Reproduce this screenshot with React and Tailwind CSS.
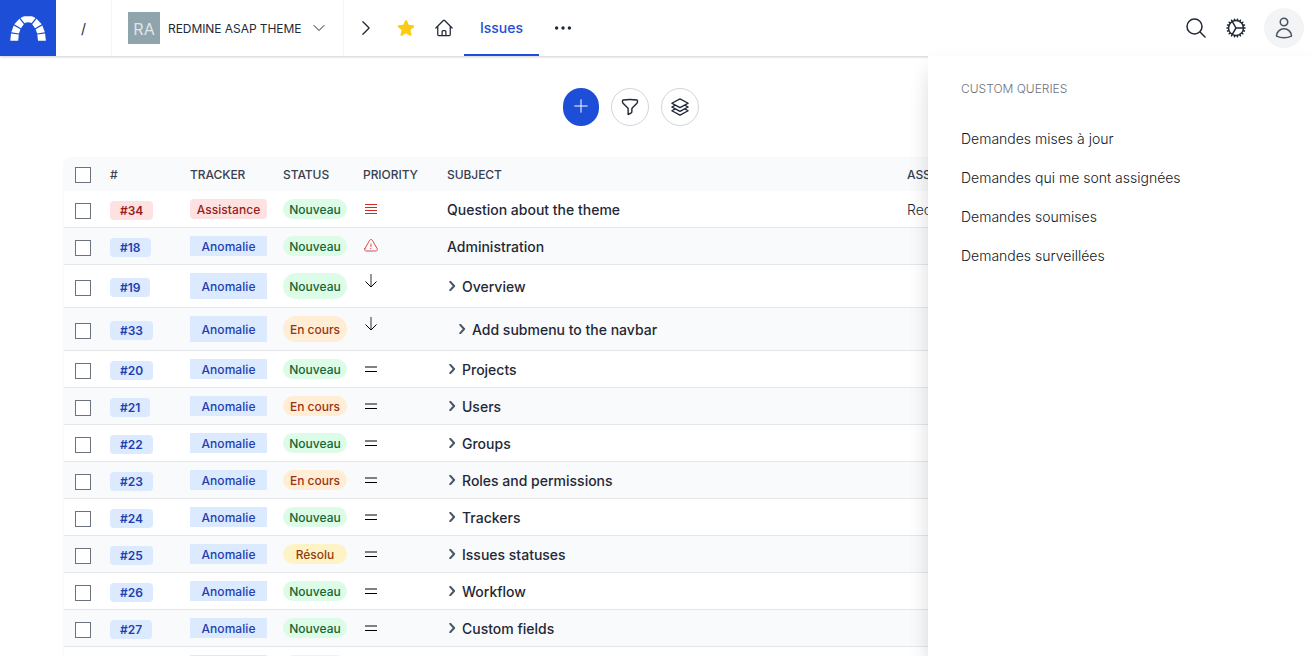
import React from 'react';

const svgProps = { fill: 'none', viewBox: '0 0 24 24', stroke: 'currentColor', strokeLinecap: 'round', strokeLinejoin: 'round' };

function Icon({ d, className = 'size-6', width = 1.5 }) {
  return (
    <svg {...svgProps} strokeWidth={width} className={`shrink-0 ${className}`} aria-hidden="true">
      {d.map((path) => <path key={path} d={path} />)}
    </svg>
  );
}

const paths = {
  down: ['M19.5 8.25l-7.5 7.5-7.5-7.5'],
  right: ['M8.25 4.5l7.5 7.5-7.5 7.5'],
  home: ['M2.25 12l8.954-8.955c.44-.439 1.152-.439 1.591 0L21.75 12M4.5 9.75v10.125c0 .621.504 1.125 1.125 1.125H9.75v-4.875c0-.621.504-1.125 1.125-1.125h2.25c.621 0 1.125.504 1.125 1.125V21h4.125c.621 0 1.125-.504 1.125-1.125V9.75M8.25 21h8.25'],
  search: ['M21 21l-5.197-5.197m0 0A7.5 7.5 0 105.196 5.196a7.5 7.5 0 0010.607 10.607z'],
  cog: ['M4.5 12a7.5 7.5 0 0015 0m-15 0a7.5 7.5 0 1115 0m-15 0H3m16.5 0H21m-1.5 0H12m-8.457 3.077l1.41-.513m14.095-5.13l1.41-.513M5.106 17.785l1.15-.964m11.49-9.642l1.149-.964M7.501 19.795l.75-1.3m7.5-12.99l.75-1.3m-6.063 16.658l.26-1.477m2.605-14.772l.26-1.477m0 17.726l-.26-1.477M10.698 4.614l-.26-1.477M16.5 19.794l-.75-1.299M7.5 4.205L12 12m6.894 5.785l-1.149-.964M6.256 7.178l-1.15-.964m15.352 8.864l-1.41-.513M4.954 9.435l-1.41-.514M12.002 12l-3.75 6.495'],
  user: ['M15.75 6a3.75 3.75 0 11-7.5 0 3.75 3.75 0 017.5 0zM4.501 20.118a7.5 7.5 0 0114.998 0A17.933 17.933 0 0112 21.75c-2.676 0-5.216-.584-7.499-1.632z'],
  plus: ['M12 4.5v15m7.5-7.5h-15'],
  funnel: ['M12 3c2.755 0 5.455.232 8.083.678.533.09.917.556.917 1.096v1.044a2.25 2.25 0 01-.659 1.591l-5.432 5.432a2.25 2.25 0 00-.659 1.591v2.927a2.25 2.25 0 01-1.244 2.013L9.75 21v-6.568a2.25 2.25 0 00-.659-1.591L3.659 7.409A2.25 2.25 0 013 5.818V4.774c0-.54.384-1.006.917-1.096A48.32 48.32 0 0112 3z'],
  layers: ['M6.429 9.75L2.25 12l4.179 2.25m0-4.5l5.571 3 5.571-3m-11.142 0L2.25 7.5 12 2.25l9.75 5.25-4.179 2.25m0 0L21.75 12l-4.179 2.25m0 0l4.179 2.25L12 21.75 2.25 16.5l4.179-2.25m11.142 0l-5.571 3-5.571-3'],
};

const statusTone = {
  Nouveau: 'bg-[#dcfce7] text-[#166534]',
  'En cours': 'bg-[#ffedd5] text-[#9a3412]',
  Résolu: 'bg-[#fef3c7] text-[#92400e]',
};

const issues = [
  { id: 34, status: 'Nouveau', priority: 'urgent', subject: 'Question about the theme', level: 0 },
  { id: 18, status: 'Nouveau', priority: 'alert', subject: 'Administration', level: 0 },
  { id: 19, status: 'Nouveau', priority: 'low', subject: 'Overview', level: 1 },
  { id: 33, status: 'En cours', priority: 'low', subject: 'Add submenu to the navbar', level: 2 },
  { id: 20, status: 'Nouveau', priority: 'normal', subject: 'Projects', level: 1 },
  { id: 21, status: 'En cours', priority: 'normal', subject: 'Users', level: 1 },
  { id: 22, status: 'Nouveau', priority: 'normal', subject: 'Groups', level: 1 },
  { id: 23, status: 'En cours', priority: 'normal', subject: 'Roles and permissions', level: 1 },
  { id: 24, status: 'Nouveau', priority: 'normal', subject: 'Trackers', level: 1 },
  { id: 25, status: 'Résolu', priority: 'normal', subject: 'Issues statuses', level: 1 },
  { id: 26, status: 'Nouveau', priority: 'normal', subject: 'Workflow', level: 1 },
  { id: 27, status: 'Nouveau', priority: 'normal', subject: 'Custom fields', level: 1 },
];

function Logo() {
  return (
    <svg className="h-10 w-10" viewBox="8 8 40 40" fill="#fff" aria-hidden="true">
      <path d="M10.3 40.8L11 33.4 18.8 34.6 18.2 40.8zM11.3 32.2L13.7 25.4 20.4 29.3 19 33.4zM14.3 24.3L19.4 18.8 23.8 24.2 21 28.2zM20.4 18L24 16.2H32L35.6 18 31.6 23.1Q28 21.4 24.6 23.2zM36.6 18.8L41.7 24.3 35 28.2 32.2 24.2zM42.3 25.4L44.9 32.2 37.2 33.4 35.6 29.3zM45.1 33.4L45.9 40.8H38L37.3 34.6z" />
    </svg>
  );
}

function Checkbox() {
  return <span role="checkbox" aria-checked="false" className="block size-4 border border-[#6b7280] bg-white" />;
}

function Priority({ kind }) {
  if (kind === 'urgent')
    return <svg className="size-4" viewBox="0 0 16 16" stroke="#dc2626" shapeRendering="crispEdges"><path d="M2 5.5h12M2 8.5h12M2 11.5h12M2 14.5h12" /></svg>;
  if (kind === 'alert')
    return <Icon className="mt-0.5 size-4 text-[#dc2626]" width={1.25} d={['M12 9v3.75m-9.303 3.376c-.866 1.5.217 3.374 1.948 3.374h14.71c1.73 0 2.813-1.874 1.948-3.374L13.949 3.378c-.866-1.5-3.032-1.5-3.898 0L2.697 16.126zM12 15.75h.007v.008H12v-.008z']} />;
  if (kind === 'low')
    return <svg className="size-4" viewBox="0 0 16 16" fill="none" stroke="#000"><path d="M8 1v13" strokeOpacity=".8" /><path d="M2.5 8.5L8 14l5.5-5.5" strokeWidth="1" /></svg>;
  return (
    <svg className="size-4" viewBox="0 0 16 16" shapeRendering="crispEdges">
      <path d="M2 7h12v2H2z" fill="#808080" /><path d="M2 12h12v1H2z" fill="#000" />
    </svg>
  );
}

const columns = 'grid grid-cols-[46px_80px_93px_80px_84px_460px_1fr]';

function IssueRow({ issue, striped }) {
  const tall = issue.priority === 'low';
  const red = issue.id === 34;
  return (
    <div className={`${columns} border-b border-[#e5e7eb] text-[#1f2937] ${tall ? 'h-[43px]' : 'h-[37px]'} ${striped ? 'bg-[#f9fafb]' : 'bg-white'}`}>
      <div className="flex items-center pt-1 pl-[11px]"><Checkbox /></div>
      <div className="flex items-center pt-[3px]">
        <span className={`flex h-[19px] items-center rounded px-2.5 text-[12px] font-semibold ${red ? 'bg-[#fee2e2] text-[#991b1b]' : 'bg-[#dbeafe] text-[#1e40af]'}`}>#{issue.id}</span>
      </div>
      <div className="py-2">
        <span className={`flex h-full w-[77px] items-center justify-center pt-px text-[12px] font-medium tracking-[0.005em] ${red ? 'rounded bg-[#fee2e2] text-[#991b1b]' : 'bg-[#dbeafe] text-[#1e40af]'}`}>{red ? 'Assistance' : 'Anomalie'}</span>
      </div>
      <div className="py-2">
        <span className={`flex h-full w-16 items-center justify-center rounded-full pt-px text-[12px] font-medium ${statusTone[issue.status]}`}>{issue.status}</span>
      </div>
      <div className="pt-2"><Priority kind={issue.priority} /></div>
      <div className={`flex items-center ${issue.level === 2 ? 'pl-2.5' : ''}`}>
        {issue.level > 0 && <Icon className="mr-[5px] size-2.5 text-[#4b5563]" width={5} d={['M8 2l9 10-9 10']} />}
        <span className="pt-px text-[14px] font-medium">{issue.subject}</span>
      </div>
      <div className="flex items-center pt-px text-[14px] font-light">{red ? 'Redmine' : ''}</div>
    </div>
  );
}

export default function App() {
  return (
    <div className="relative h-[656px] w-[1312px] overflow-hidden bg-white font-['Inter',sans-serif] text-[#1f2937]">
      <header className="relative z-10 flex h-14 items-center bg-white shadow-[0_1px_3px_rgba(0,0,0,0.12),0_1px_2px_rgba(0,0,0,0.08)]">
        <a className="flex size-14 items-center justify-center bg-[#1d4ed8]"><Logo /></a>
        <span className="flex h-full w-14 items-center justify-center border-r border-[#f3f4f6] text-[14px]">/</span>
        <div className="flex h-full w-[232px] items-center border-r border-[#f3f4f6] pl-4">
          <span className="flex size-8 items-center justify-center bg-[#90a4ae] pt-0.5 text-[16px] text-[#dfe5e8]">RA</span>
          <span className="ml-2 w-[143px] pt-0.5 text-[12px] tracking-[-0.005em] whitespace-nowrap">REDMINE ASAP THEME</span>
          <Icon d={paths.down} className="size-4" />
        </div>
        <Icon d={paths.right} className="ml-3 size-5" />
        <svg viewBox="0 0 24 24" className="ml-5 size-5 fill-[#facc15]"><path d="M10.788 3.21c.448-1.077 1.976-1.077 2.424 0l2.082 5.007 5.404.433c1.164.093 1.636 1.545.749 2.305l-4.117 3.527 1.257 5.273c.271 1.136-.964 2.033-1.96 1.425L12 18.354 7.373 21.18c-.996.608-2.231-.29-1.96-1.425l1.257-5.273-4.117-3.527c-.887-.76-.415-2.212.749-2.305l5.404-.433 2.082-5.006z" /></svg>
        <Icon d={paths.home} className="ml-[18px] size-5" />
        <a className="ml-2.5 flex h-full w-[75px] items-center justify-center border-b-2 border-[#1d4ed8] text-[14px] font-medium text-[#1d4ed8]">Issues</a>
        <svg viewBox="0 0 24 24" className="ml-3 size-6" fill="currentColor"><circle cx="5.6" cy="12" r="1.7" /><circle cx="12" cy="12" r="1.7" /><circle cx="18.4" cy="12" r="1.7" /></svg>
        <div className="ml-auto flex items-center gap-4 pr-2">
          <Icon d={paths.search} />
          <Icon d={paths.cog} />
          <span className="flex size-10 items-center justify-center rounded-full bg-[#f3f4f6]"><Icon d={paths.user} className="size-6 text-[#4b5563]" /></span>
        </div>
      </header>

      <main className="flex flex-col pt-8 pl-16">
        <div className="ml-[499px] flex h-[38px] items-center gap-3">
          <button className="flex h-[38px] w-9 items-center justify-center rounded-full bg-[#1d4ed8] text-white"><Icon d={paths.plus} className="size-5 -translate-y-px" width={1.2} /></button>
          <button className="flex size-[38px] items-center justify-center rounded-full border border-[#d1d5db]"><Icon d={paths.funnel} className="size-5" width={1.7} /></button>
          <button className="flex size-[38px] items-center justify-center rounded-full border border-[#d1d5db]"><Icon d={paths.layers} className="size-5" width={1.7} /></button>
        </div>
        <section className="mt-8 w-[1184px] rounded-t-md shadow-[0_0_2px_rgba(0,0,0,0.08)]">
          <div className={`${columns} h-[33px] items-center rounded-t-md bg-[#f9fafb] text-[12px] font-medium text-[#374151]`}>
            <div className="pt-px pl-[11px]"><Checkbox /></div>
            {['#', 'TRACKER', 'STATUS', 'PRIORITY', 'SUBJECT', 'ASSIGNEE'].map((label) => <div key={label} className="pt-px tracking-[-0.005em]">{label}</div>)}
          </div>
          {issues.map((issue, i) => <IssueRow key={issue.id} issue={issue} striped={i % 2 === 1} />)}
          <div className={`${columns} h-[37px] bg-white py-2`}>
            <span className="col-start-3 w-[77px] bg-[#dbeafe]" />
            <span className="w-16 rounded-full bg-[#dcfce7]" />
          </div>
        </section>
      </main>

      <aside className="absolute top-14 right-0 bottom-0 z-20 w-96 bg-white px-[33px] pt-6 shadow-[0_20px_25px_-5px_rgba(0,0,0,0.1),0_8px_20px_-2px_rgba(0,0,0,0.1)]">
        <h3 className="text-[12px] leading-[18px] font-light text-[#6b7280]">CUSTOM QUERIES</h3>
        <nav className="mt-[21px] flex flex-col text-[14px] font-light text-[#111827]">
          {['Demandes mises à jour', 'Demandes qui me sont assignées', 'Demandes soumises', 'Demandes surveillées'].map((q) => (
            <a key={q} className="flex h-[39px] items-center">{q}</a>
          ))}
        </nav>
      </aside>
    </div>
  );
}
